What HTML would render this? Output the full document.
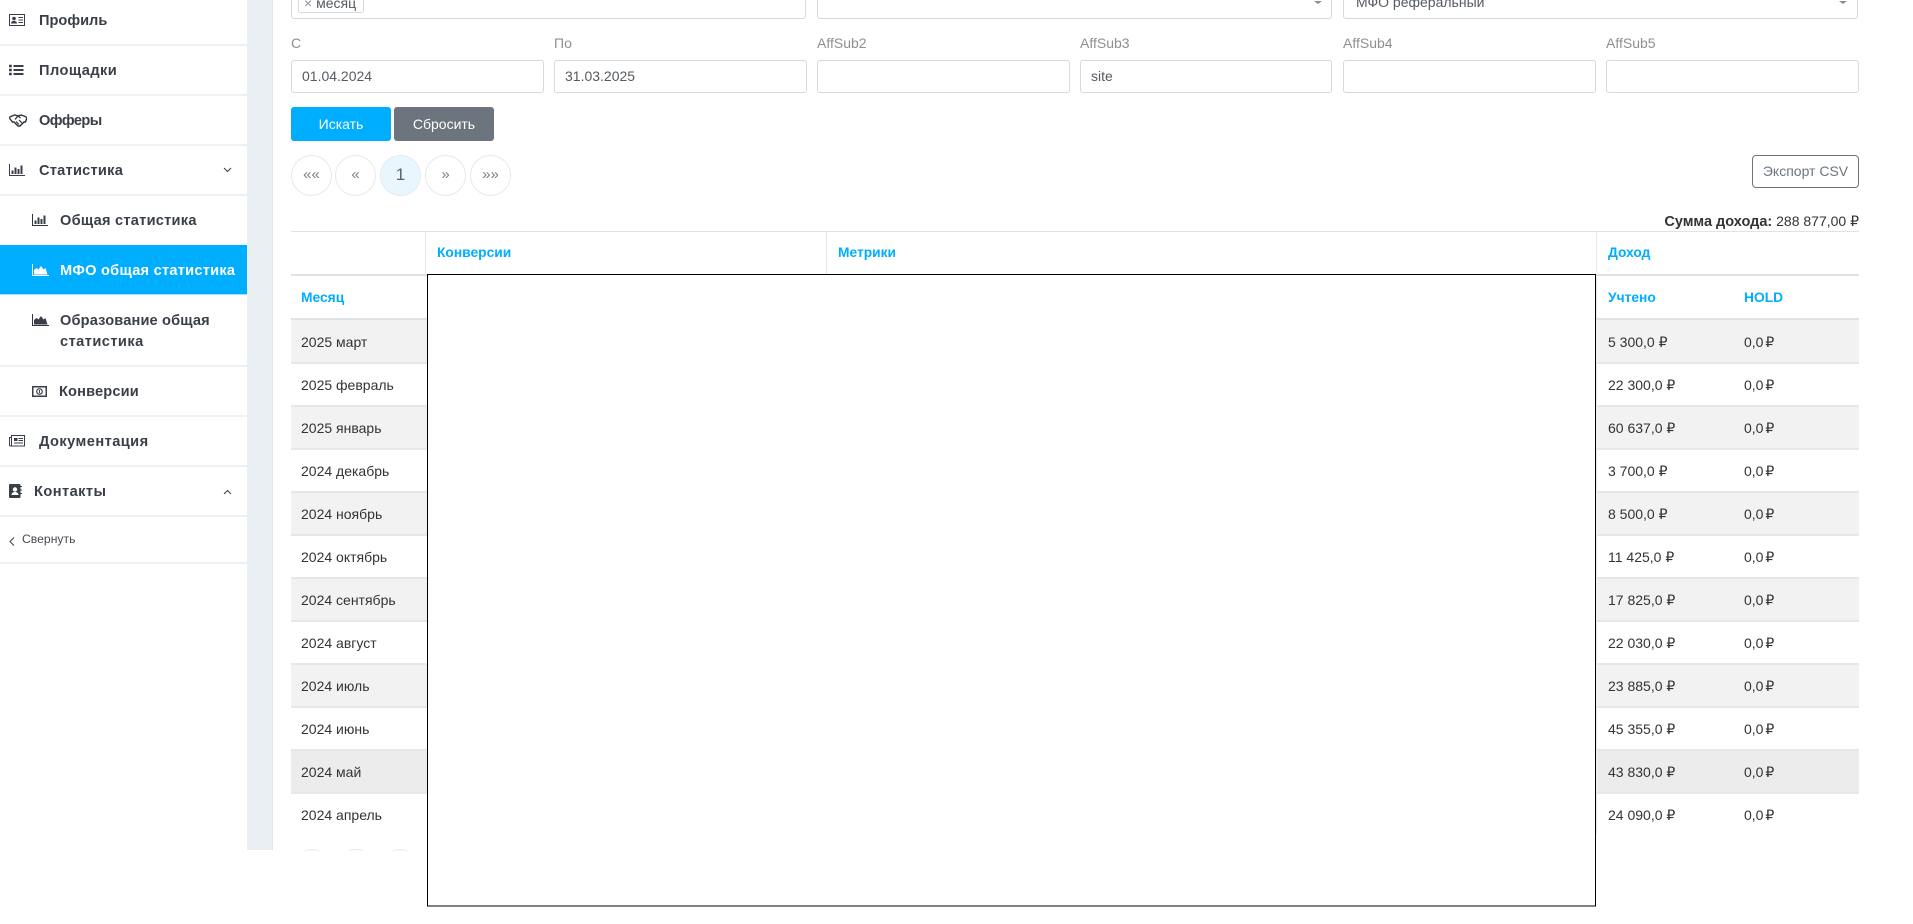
<!DOCTYPE html>
<html lang="ru"><head><meta charset="utf-8"><title>Статистика</title>
<style>
html,body{margin:0;padding:0;background:#fff}
body{width:1913px;height:924px;position:relative;overflow:hidden;font-family:"Liberation Sans","DejaVu Sans",sans-serif;font-size:14px;color:#333}
div,span,svg{position:absolute}
.t{line-height:20px;white-space:nowrap}
.b{font-weight:700;font-size:14.6px;color:#3a3f47}
.sep{left:0;width:247px;height:2px;background:#eff0f1}
.lab{color:#8f8f8f;font-size:14px}
.inp{height:31px;border:1px solid #d5d8dc;border-radius:3px;background:#fff;box-sizing:content-box}
.pg{top:155px;width:39px;height:39px;border:1px solid #e8e9eb;border-radius:50%;text-align:center;line-height:38px;color:#7a8188;font-size:15px;background:#fff}
.h{color:#00aeff;font-weight:700;font-size:13.8px}
.row{left:291px;width:1568px;height:43px}
.g{background:#f2f2f2}
.line{left:291px;width:1568px;height:2px;background:#e6e7ea}
.hl{left:291px;width:1568px;height:2px;background:#dfe2e6}
.c{font-size:14px;color:#333}
.z{word-spacing:-2px}
</style></head><body>
<!-- gray strip -->
<div style="left:247px;top:0;width:25px;height:850px;background:#e9eff2"></div>
<div style="left:272px;top:0;width:1px;height:850px;background:#e2e6e9"></div>

<!-- sidebar -->
<div class="sep" style="top:44px"></div><div class="sep" style="top:94px"></div><div class="sep" style="top:144px"></div><div class="sep" style="top:194px"></div>
<div style="left:0;top:245px;width:247px;height:49px;background:#00aeff"></div>
<div style="left:0;top:294px;width:247px;height:1px;background:#a9dffa"></div>
<div class="sep" style="top:365px"></div><div class="sep" style="top:415px"></div><div class="sep" style="top:465px"></div><div class="sep" style="top:515px"></div><div class="sep" style="top:562px"></div>

<svg style="left:9px;top:14px" width="16" height="12" viewBox="0 0 16 12"><rect x=".5" y=".5" width="15" height="11" fill="none" stroke="#3a3f47"/><circle cx="5" cy="4.5" r="1.8" fill="#3a3f47"/><path d="M2 9.500c0-3.500 6-3.500 6 0z" fill="#3a3f47"/><path d="M9.500 3.500h4.500M9.500 6h4.500M9.500 8.500h4.500" stroke="#3a3f47"/></svg>
<div class="t b" style="left:39px;top:11px">Профиль</div>

<svg style="left:9px;top:64px" width="15" height="12" viewBox="0 0 15 12"><path d="M0 2h2.800M0 6h2.800M0 10h2.800" stroke="#3a3f47" stroke-width="2.400"/><path d="M4.500 2H14.500M4.500 6H14.500M4.500 10H14.500" stroke="#3a3f47" stroke-width="1.900"/></svg>
<div class="t b" style="left:39px;top:61px;letter-spacing:.45px">Площадки</div>

<svg style="left:9px;top:114px" width="18" height="13" viewBox="0 0 18 13"><path d="M0 3.500l3-1.500 3-1 3 1 3-1 3 1 3 1.500-1.500 4.500-1.500 0-4 4-2 0-4-4-1.500 0z" fill="none" stroke="#2f343b" stroke-width="1.400"/><path d="M6 5.500l3-3.500 2.500 2M7 7.500l3 3M10 6l3 3" fill="none" stroke="#2f343b" stroke-width="1.200"/></svg>
<div class="t b" style="left:39px;top:111px;letter-spacing:-.6px">Офферы</div>

<svg style="left:9px;top:164px" width="16" height="12" viewBox="0 0 16 12"><path d="M.5 0v11.500H16" fill="none" stroke="#3a3f47"/><path d="M3.500 10V6.500M6.500 10V3.500M9.500 10V5M12.500 10V1.500" stroke="#3a3f47" stroke-width="2"/></svg>
<div class="t b" style="left:39px;top:161px;letter-spacing:.25px">Статистика</div>
<svg style="left:223px;top:167px" width="9" height="6" viewBox="0 0 9 6"><path d="M1 1l3.500 3.500L8 1" fill="none" stroke="#3a3f47" stroke-width="1"/></svg>

<svg style="left:32px;top:214px" width="16" height="12" viewBox="0 0 16 12"><path d="M.5 0v11.500H16" fill="none" stroke="#3a3045"/><path d="M3.500 10V6.500M6.500 10V3.500M9.500 10V5M12.500 10V1.500" stroke="#3a3f47" stroke-width="2"/></svg>
<div class="t b" style="left:60px;top:211px;letter-spacing:.25px">Общая статистика</div>

<svg style="left:32px;top:264px" width="17" height="12" viewBox="0 0 17 12"><path d="M.5 0v11.500H17" fill="none" stroke="#fff"/><path d="M2 10.500V6l2.500-2 2 1.500L9 2l2.500 3.500 2-1.500 2 6.500z" fill="#fff"/></svg>
<div class="t b" style="left:60px;top:261px;color:#fff;letter-spacing:.25px">МФО общая статистика</div>

<svg style="left:32px;top:314px" width="17" height="12" viewBox="0 0 17 12"><path d="M.5 0v11.500H17" fill="none" stroke="#3a3045"/><path d="M2 10.500V6l2.500-2 2 1.500L9 2l2.500 3.500 2-1.500 2 6.500z" fill="#3a3f47"/></svg>
<div class="t b" style="left:60px;top:311px;letter-spacing:.15px">Образование общая</div>
<div class="t b" style="left:60px;top:332px;letter-spacing:.45px">статистика</div>

<svg style="left:32px;top:386px" width="15" height="11" viewBox="0 0 15 11"><rect x=".75" y=".75" width="13.500" height="9.500" fill="none" stroke="#3a3f47" stroke-width="1.500"/><circle cx="7.500" cy="5.500" r="2.800" fill="none" stroke="#3a3f47" stroke-width="1.200"/><path d="M7.500 4v3" stroke="#3a3f47"/></svg>
<div class="t b" style="left:59px;top:382px;letter-spacing:.15px">Конверсии</div>

<svg style="left:9px;top:435px" width="16" height="12" viewBox="0 0 16 12"><rect x="2.500" y=".5" width="13" height="10.500" fill="none" stroke="#3a3f47"/><path d="M2.500 2.500H.5V10a1 1 0 0 0 1 1h1" fill="none" stroke="#3a3f47"/><rect x="5" y="3" width="3.500" height="3" fill="#3a3f47"/><path d="M9.500 3.500h4.500M9.500 5.500h4.500M5 8h9" stroke="#3a3f47"/></svg>
<div class="t b" style="left:39px;top:432px;letter-spacing:.45px">Документация</div>

<svg style="left:9px;top:484px" width="13" height="14" viewBox="0 0 13 14"><path d="M1.500 0H10.500a1 1 0 0 1 1 1V13a1 1 0 0 1-1 1H1.500a1.500 1 0 0 1-1.500-1V1a1.500 1 0 0 1 1.500-1z" fill="#3a3f47"/><path d="M11.500 2.500H13M11.500 6H13M11.500 9.500H13" stroke="#3a3f47"/><circle cx="6" cy="5.500" r="2.200" fill="#fff"/><path d="M2.500 11c0-4 7-4 7 0z" fill="#fff"/></svg>
<div class="t b" style="left:34px;top:482px;letter-spacing:.45px">Контакты</div>
<svg style="left:223px;top:489px" width="9" height="6" viewBox="0 0 9 6"><path d="M1 5l3.500-3.500L8 5" fill="none" stroke="#3a3f47" stroke-width="1"/></svg>

<svg style="left:9px;top:537px" width="6" height="9" viewBox="0 0 6 9"><path d="M5 .5L1 4.500 5 8.500" fill="none" stroke="#3a3f47" stroke-width="1"/></svg>
<div class="t" style="left:22px;top:529px;font-size:12.2px;color:#454a50">Свернуть</div>

<!-- filters top row -->
<div class="inp" style="left:291px;top:-14px;width:513px"></div>
<div style="left:298px;top:-10px;width:64px;height:21px;border:1px solid #d5d8dc;border-radius:3px;background:#fff"></div>
<div class="t" style="left:304px;top:-7px;color:#555b61"><span style="position:static;color:#8b9197">×</span> месяц</div>
<div class="inp" style="left:817px;top:-14px;width:513px"></div>
<div class="inp" style="left:1343px;top:-14px;width:513px"></div>
<div class="t" style="left:1356px;top:-8px;color:#555b61">МФО реферальный</div>
<div style="left:1314px;top:1px;width:0;height:0;border-left:4px solid transparent;border-right:4px solid transparent;border-top:3px solid #8a8f94"></div>
<div style="left:1839px;top:1px;width:0;height:0;border-left:4px solid transparent;border-right:4px solid transparent;border-top:3px solid #8a8f94"></div>

<!-- filter labels -->
<div class="t lab" style="left:291px;top:33px">С</div>
<div class="t lab" style="left:554px;top:33px">По</div>
<div class="t lab" style="left:817px;top:33px">AffSub2</div>
<div class="t lab" style="left:1080px;top:33px">AffSub3</div>
<div class="t lab" style="left:1343px;top:33px">AffSub4</div>
<div class="t lab" style="left:1606px;top:33px">AffSub5</div>

<div class="inp" style="left:291px;top:60px;width:251px"></div>
<div class="inp" style="left:554px;top:60px;width:251px"></div>
<div class="inp" style="left:817px;top:60px;width:251px"></div>
<div class="inp" style="left:1080px;top:60px;width:250px"></div>
<div class="inp" style="left:1343px;top:60px;width:251px"></div>
<div class="inp" style="left:1606px;top:60px;width:251px"></div>
<div class="t" style="left:302px;top:66px;color:#555b61">01.04.2024</div>
<div class="t" style="left:565px;top:66px;color:#555b61">31.03.2025</div>
<div class="t" style="left:1091px;top:66px;color:#555b61">site</div>

<!-- buttons -->
<div class="t" style="left:291px;top:107px;width:100px;height:34px;line-height:34px;background:#00aeff;color:#fff;border-radius:3px;text-align:center">Искать</div>
<div class="t" style="left:394px;top:107px;width:100px;height:34px;line-height:34px;background:#6c757d;color:#fff;border-radius:3px;text-align:center">Сбросить</div>

<!-- pagination -->
<div class="pg" style="left:291px">««</div>
<div class="pg" style="left:335px">«</div>
<div class="pg" style="left:380px;background:#eaf6fd;font-size:17px;color:#5a6168">1</div>
<div class="pg" style="left:425px">»</div>
<div class="pg" style="left:470px">»»</div>
<div class="t" style="left:1752px;top:155px;width:105px;height:31px;line-height:31px;border:1px solid #6c757d;border-radius:4px;text-align:center;color:#6c757d">Экспорт CSV</div>

<div class="t" style="right:54px;top:211px"><b style="color:#333;font-size:14.5px">Сумма дохода:</b> 288 877,00 ₽</div>

<!-- table head -->
<div style="left:291px;top:231px;width:1568px;height:1px;background:#e0e2e5"></div>
<div style="left:425px;top:231px;width:1px;height:44px;background:#e6e8ea"></div>
<div style="left:826px;top:231px;width:1px;height:44px;background:#e6e8ea"></div>
<div style="left:1596px;top:231px;width:1px;height:603px;background:#e6e8ea"></div>
<div class="hl" style="top:274px"></div>
<div class="hl" style="top:318px"></div>
<div class="t h" style="left:437px;top:243px">Конверсии</div>
<div class="t h" style="left:838px;top:243px">Метрики</div>
<div class="t h" style="left:1608px;top:243px">Доход</div>
<div class="t h" style="left:301px;top:288px">Месяц</div>
<div class="t h" style="left:1608px;top:288px">Учтено</div>
<div class="t h" style="left:1744px;top:288px">HOLD</div>

<!-- rows -->
<div class="row g" style="top:320px"></div>
<div class="row g" style="top:406px"></div>
<div class="row g" style="top:492px"></div>
<div class="row g" style="top:578px"></div>
<div class="row g" style="top:664px"></div>
<div class="row" style="top:750px;background:#ececec"></div>
<div class="line" style="top:362px"></div><div class="line" style="top:405px"></div><div class="line" style="top:448px"></div><div class="line" style="top:491px"></div><div class="line" style="top:534px"></div><div class="line" style="top:577px"></div><div class="line" style="top:620px"></div><div class="line" style="top:663px"></div><div class="line" style="top:706px"></div><div class="line" style="top:749px"></div><div class="line" style="top:792px"></div>

<div class="t c" style="left:301px;top:332px">2025 март</div><div class="t c" style="left:1608px;top:332px">5 300,0 ₽</div><div class="t c z" style="left:1744px;top:332px">0,0 ₽</div>
<div class="t c" style="left:301px;top:375px">2025 февраль</div><div class="t c" style="left:1608px;top:375px">22 300,0 ₽</div><div class="t c z" style="left:1744px;top:375px">0,0 ₽</div>
<div class="t c" style="left:301px;top:418px">2025 январь</div><div class="t c" style="left:1608px;top:418px">60 637,0 ₽</div><div class="t c z" style="left:1744px;top:418px">0,0 ₽</div>
<div class="t c" style="left:301px;top:461px">2024 декабрь</div><div class="t c" style="left:1608px;top:461px">3 700,0 ₽</div><div class="t c z" style="left:1744px;top:461px">0,0 ₽</div>
<div class="t c" style="left:301px;top:504px">2024 ноябрь</div><div class="t c" style="left:1608px;top:504px">8 500,0 ₽</div><div class="t c z" style="left:1744px;top:504px">0,0 ₽</div>
<div class="t c" style="left:301px;top:547px">2024 октябрь</div><div class="t c" style="left:1608px;top:547px">11 425,0 ₽</div><div class="t c z" style="left:1744px;top:547px">0,0 ₽</div>
<div class="t c" style="left:301px;top:590px">2024 сентябрь</div><div class="t c" style="left:1608px;top:590px">17 825,0 ₽</div><div class="t c z" style="left:1744px;top:590px">0,0 ₽</div>
<div class="t c" style="left:301px;top:633px">2024 август</div><div class="t c" style="left:1608px;top:633px">22 030,0 ₽</div><div class="t c z" style="left:1744px;top:633px">0,0 ₽</div>
<div class="t c" style="left:301px;top:676px">2024 июль</div><div class="t c" style="left:1608px;top:676px">23 885,0 ₽</div><div class="t c z" style="left:1744px;top:676px">0,0 ₽</div>
<div class="t c" style="left:301px;top:719px">2024 июнь</div><div class="t c" style="left:1608px;top:719px">45 355,0 ₽</div><div class="t c z" style="left:1744px;top:719px">0,0 ₽</div>
<div class="t c" style="left:301px;top:762px">2024 май</div><div class="t c" style="left:1608px;top:762px">43 830,0 ₽</div><div class="t c z" style="left:1744px;top:762px">0,0 ₽</div>
<div class="t c" style="left:301px;top:805px">2024 апрель</div><div class="t c" style="left:1608px;top:805px">24 090,0 ₽</div><div class="t c z" style="left:1744px;top:805px">0,0 ₽</div>

<!-- clipped bottom pagination arcs -->
<svg style="left:291px;top:848px" width="130" height="3" viewBox="0 0 130 3"><path d="M14 2.500Q21 .5 28 2.500M58 2.500Q65 .5 72 2.500M102 2.500Q109 .5 116 2.500" fill="none" stroke="#e6e8ea"/></svg>

<!-- redaction box -->
<svg style="left:0;top:0" width="1913" height="924" viewBox="0 0 1913 924"><rect x="427.500" y="274.500" width="1168" height="631.500" fill="#fff" stroke="#000" stroke-width="1"/></svg>
</body></html>
